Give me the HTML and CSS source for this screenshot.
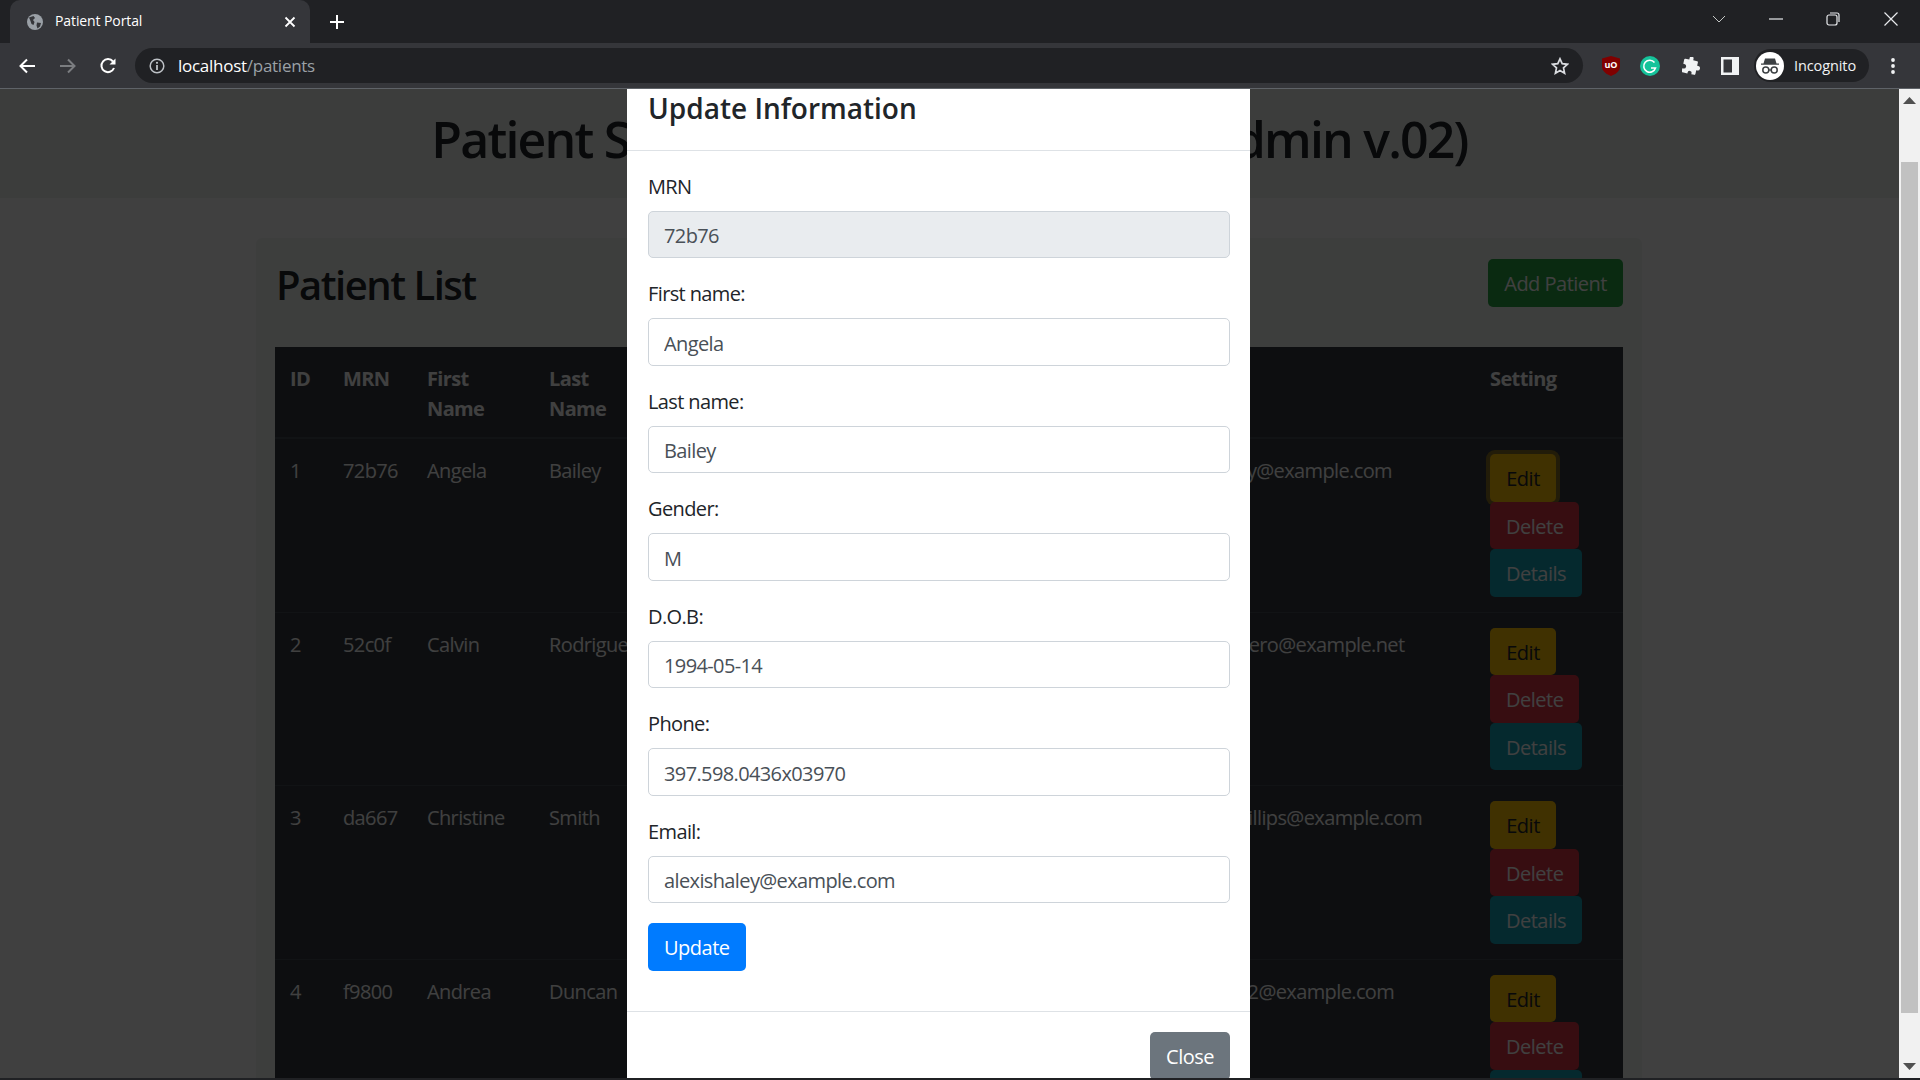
FILE: index.html
```html
<!DOCTYPE html>
<html lang="en">
<head>
<meta charset="UTF-8">
<title>Patient Portal</title>
<link rel="stylesheet" href="styles.css">
</head>
<body>
  <div class="tabstrip">
    <div class="tab">
      <svg class="tab-icon" width="18" height="18" viewBox="0 0 18 18"><circle cx="9" cy="9" r="8" fill="#9aa0a6"/><path d="M3 4.500 7.500 3 9 5 7 7l1.500 2-1 3-2-1-1-3zM11 9.500l4 .5-1 3.500-2.500 2-1-3z" fill="#35363a"/></svg>
      <span class="tab-title">Patient Portal</span>
      <svg class="tab-close" width="12" height="12" viewBox="0 0 12 12"><path d="M1.500 1.500l9 9M10.500 1.500l-9 9" stroke="#fff" stroke-width="1.800"/></svg>
    </div>
    <svg class="new-tab" width="16" height="16" viewBox="0 0 16 16"><path d="M8 1v14M1 8h14" stroke="#fff" stroke-width="2"/></svg>
    <div class="window-btns">
      <svg class="win-chevron" width="14" height="8" viewBox="0 0 14 8"><path d="M1 1l6 6 6-6" fill="none" stroke="#c4c7c5" stroke-width="1"/></svg>
      <svg class="win-min" width="14" height="2" viewBox="0 0 14 2"><path d="M0 1h14" stroke="#e8eaed" stroke-width="1.200"/></svg>
      <svg class="win-max" width="14" height="14" viewBox="0 0 14 14"><rect x="1" y="3" width="10" height="10" rx="2" fill="none" stroke="#e8eaed" stroke-width="1.200"/><path d="M4 1h7a2 2 0 0 1 2 2v7" fill="none" stroke="#e8eaed" stroke-width="1.200"/></svg>
      <svg class="win-close" width="14" height="14" viewBox="0 0 14 14"><path d="M.5.5l13 13M13.500.5l-13 13" stroke="#e8eaed" stroke-width="1.200"/></svg>
    </div>
  </div>

  <div class="toolbar">
    <svg class="nav-back" width="18" height="18" viewBox="0 0 18 18"><path d="M17 9H3M9 2.500 2.500 9 9 15.500" fill="none" stroke="#fff" stroke-width="2"/></svg>
    <svg class="nav-forward" width="18" height="18" viewBox="0 0 18 18"><path d="M1 9h14M9 2.500 15.500 9 9 15.500" fill="none" stroke="#7b7d80" stroke-width="2"/></svg>
    <svg class="nav-reload" width="18" height="18" viewBox="0 0 18 18"><path d="M15 11a6.500 6.500 0 1 1-1-6.500" fill="none" stroke="#fff" stroke-width="2"/><path d="M16.500 1.500v6h-6z" fill="#fff"/></svg>
    <div class="omnibox">
      <svg class="info-icon" width="16" height="16" viewBox="0 0 16 16"><circle cx="8" cy="8" r="6.800" fill="none" stroke="#bdc1c6" stroke-width="1.500"/><path d="M8 7v5" stroke="#bdc1c6" stroke-width="1.800"/><circle cx="8" cy="4.800" r="1.100" fill="#bdc1c6"/></svg>
      <span class="url"><span class="url-host">localhost</span>/patients</span>
      <svg class="star" width="18" height="18" viewBox="0 0 18 18"><path d="M9 1.800l2.200 4.900 5.300.6-4 3.600 1.100 5.300L9 13.500l-4.600 2.700 1.100-5.300-4-3.600 5.300-.6z" fill="none" stroke="#dadce0" stroke-width="1.700"/></svg>
    </div>
    <svg class="ext ext-ublock" width="18" height="20" viewBox="0 0 18 20"><path d="M9 0l9 2.500v8C18 15.500 13 18.500 9 20 5 18.500 0 15.500 0 10.500v-8z" fill="#800000"/><text x="9" y="12" text-anchor="middle" class="ublock-text">uO</text></svg>
    <svg class="ext ext-grammarly" width="20" height="20" viewBox="0 0 20 20"><circle cx="10" cy="10" r="10" fill="#15c39a"/><path d="M14.500 6.500A6 6 0 1 0 15.500 12H11" fill="none" stroke="#fff" stroke-width="1.600"/></svg>
    <svg class="ext ext-puzzle" width="18" height="18" viewBox="0 0 18 18"><path d="M6 1.500a2 2 0 0 1 4 0V3h4a1 1 0 0 1 1 1v3.500h1a2.300 2.300 0 0 1 0 4.600h-1V16a1 1 0 0 1-1 1h-3v-1a2 2 0 0 0-4 0v1H2a1 1 0 0 1-1-1v-3h1a2.300 2.300 0 0 0 0-4.600H1V4a1 1 0 0 1 1-1h4z" fill="#f1f3f4" transform="rotate(12 9 9)"/></svg>
    <svg class="ext ext-panel" width="18" height="18" viewBox="0 0 18 18"><rect x="0" y="0" width="18" height="18" fill="#f1f3f4"/><rect x="2.500" y="2.500" width="8.500" height="13" fill="#35363a"/></svg>
    <div class="profile">
      <svg class="avatar" width="28" height="28" viewBox="0 0 28 28"><circle cx="14" cy="14" r="14" fill="#fff"/><path d="M9 6.500h10l1.500 5h2.500v1.300H5v-1.300h2.500z" fill="#3c4043"/><circle cx="9.800" cy="18" r="3" fill="none" stroke="#3c4043" stroke-width="1.500"/><circle cx="18.200" cy="18" r="3" fill="none" stroke="#3c4043" stroke-width="1.500"/><path d="M12.800 18h2.400" stroke="#3c4043" stroke-width="1.300"/></svg>
      <span class="profile-name">Incognito</span>
    </div>
    <svg class="kebab" width="4" height="16" viewBox="0 0 4 16"><circle cx="2" cy="2" r="1.900" fill="#f1f3f4"/><circle cx="2" cy="8" r="1.900" fill="#f1f3f4"/><circle cx="2" cy="14" r="1.900" fill="#f1f3f4"/></svg>
  </div>

  <div class="viewport">
    <div class="page">
      <div class="jumbotron">
        <h1>Patient Satisfaction Management (Admin v.02)</h1>
      </div>

      <div class="card">
        <div class="card-top">
          <h2>Patient List</h2>
          <button class="btn btn-success">Add Patient</button>
        </div>
        <table class="patients">
          <colgroup>
            <col class="col-id"><col class="col-mrn"><col class="col-first"><col class="col-last"><col class="col-gender"><col class="col-dob"><col class="col-phone"><col class="col-email"><col class="col-setting">
          </colgroup>
          <thead>
            <tr><th>ID</th><th>MRN</th><th>First Name</th><th>Last Name</th><th>Gender</th><th>D.O.B</th><th>Phone</th><th>Email</th><th>Setting</th></tr>
          </thead>
          <tbody>
            <tr>
              <td>1</td><td>72b76</td><td>Angela</td><td>Bailey</td><td>M</td><td>1994-05-14</td><td>397.598.0436x03970</td><td>alexishaley@example.com</td>
              <td class="cell-actions"><div class="actions"><button class="btn btn-warning btn-focus">Edit</button><button class="btn btn-danger">Delete</button><button class="btn btn-info">Details</button></div></td>
            </tr>
            <tr>
              <td>2</td><td>52c0f</td><td>Calvin</td><td>Rodriguez</td><td>M</td><td>1987-02-09</td><td>594.221.0187</td><td>alfredromero@example.net</td>
              <td class="cell-actions"><div class="actions"><button class="btn btn-warning">Edit</button><button class="btn btn-danger">Delete</button><button class="btn btn-info">Details</button></div></td>
            </tr>
            <tr>
              <td>3</td><td>da667</td><td>Christine</td><td>Smith</td><td>F</td><td>1979-11-23</td><td>726.340.9915</td><td>kristinaphillips@example.com</td>
              <td class="cell-actions"><div class="actions"><button class="btn btn-warning">Edit</button><button class="btn btn-danger">Delete</button><button class="btn btn-info">Details</button></div></td>
            </tr>
            <tr>
              <td>4</td><td>f9800</td><td>Andrea</td><td>Duncan</td><td>F</td><td>2001-07-30</td><td>815.662.4408</td><td>armorris32@example.com</td>
              <td class="cell-actions"><div class="actions"><button class="btn btn-warning">Edit</button><button class="btn btn-danger">Delete</button><button class="btn btn-info">Details</button></div></td>
            </tr>
          </tbody>
        </table>
      </div>

      <div class="backdrop"></div>

      <div class="modal">
        <div class="modal-header">
          <h5>Update Information</h5>
        </div>
        <div class="modal-body">
          <form>
            <div class="form-group"><label>MRN</label><input class="form-control" type="text" value="72b76" disabled></div>
            <div class="form-group"><label>First name:</label><input class="form-control" type="text" value="Angela"></div>
            <div class="form-group"><label>Last name:</label><input class="form-control" type="text" value="Bailey"></div>
            <div class="form-group"><label>Gender:</label><input class="form-control" type="text" value="M"></div>
            <div class="form-group"><label>D.O.B:</label><input class="form-control" type="text" value="1994-05-14"></div>
            <div class="form-group"><label>Phone:</label><input class="form-control" type="text" value="397.598.0436x03970"></div>
            <div class="form-group"><label>Email:</label><input class="form-control" type="text" value="alexishaley@example.com"></div>
            <button type="button" class="btn btn-primary">Update</button>
          </form>
        </div>
        <div class="modal-footer">
          <button type="button" class="btn btn-secondary">Close</button>
        </div>
      </div>
    </div>

    <div class="scrollbar">
      <svg class="arrow" width="13" height="7" viewBox="0 0 13 7"><path d="M6.500 0 13 7H0z" fill="#505050"/></svg>
      <div class="track"><div class="thumb"></div></div>
      <svg class="arrow" width="13" height="7" viewBox="0 0 13 7"><path d="M0 0h13L6.500 7z" fill="#505050"/></svg>
    </div>
  </div>
  <div class="bottom-edge"></div>
</body>
</html>
```

FILE: styles.css
```css
* {
  box-sizing: border-box;
}

body {
  font-family: "Open Sans", "Noto Sans", sans-serif;
  font-size: 20px;
  line-height: 30px;
  letter-spacing: -0.62px;
  color: #212529;
  margin: 0;
  height: 1080px;
  overflow: hidden;
  display: flex;
  flex-direction: column;
  background-color: #202124;
}

/* browser chrome */
.tabstrip {
  height: 43px;
  background-color: #202124;
  display: flex;
  align-items: center;
  flex-shrink: 0;
}

.tab {
  width: 300px;
  height: 43px;
  margin-left: 10px;
  padding: 0 14px 0 16px;
  background-color: #35363a;
  border-radius: 10px 10px 0 0;
  display: flex;
  align-items: center;
}

.tab-title {
  flex: 1;
  margin-left: 11px;
  padding-bottom: 2px;
  font-size: 14px;
  letter-spacing: -0.1px;
  color: #fff;
}

.new-tab {
  margin-left: 19px;
}

.window-btns {
  margin-left: auto;
  display: flex;
  align-items: center;
  padding-bottom: 6px;
}

.win-chevron {
  margin-right: 43px;
}

.win-min {
  margin-right: 43px;
}

.win-max {
  margin-right: 44px;
}

.win-close {
  margin-right: 22px;
}

.toolbar {
  height: 46px;
  padding-left: 18px;
  background-color: #35363a;
  border-bottom: 1px solid #5f6368;
  display: flex;
  align-items: center;
  flex-shrink: 0;
}

.nav-forward {
  margin-left: 23px;
}

.nav-reload {
  margin-left: 22px;
}

.omnibox {
  width: 1448px;
  height: 35px;
  margin-left: 18px;
  padding: 0 14px 0 14px;
  background-color: #202124;
  border-radius: 18px;
  display: flex;
  align-items: center;
}

.url {
  flex: 1;
  margin-left: 13px;
  font-size: 17px;
  letter-spacing: -0.27px;
  color: #9aa0a6;
}

.url-host {
  color: #fff;
}

.ext-ublock {
  margin-left: 19px;
}

.ublock-text {
  font-size: 9px;
  font-weight: 700;
  letter-spacing: 0;
  fill: #fff;
}

.ext-grammarly {
  margin-left: 20px;
}

.ext-puzzle {
  margin-left: 22px;
}

.ext-panel {
  margin-left: 21px;
}

.profile {
  width: 115px;
  height: 33px;
  margin-left: 15px;
  padding-left: 2px;
  background-color: #202124;
  border-radius: 17px;
  display: flex;
  align-items: center;
}

.profile-name {
  margin-left: 10px;
  font-size: 14.5px;
  letter-spacing: -0.1px;
  color: #f1f3f4;
}

.kebab {
  margin-left: 22px;
}

.viewport {
  flex: 1;
  min-height: 0;
  display: flex;
}

.bottom-edge {
  height: 2px;
  background-color: #202124;
  flex-shrink: 0;
}

.scrollbar {
  width: 21px;
  background-color: #f1f1f1;
  display: flex;
  flex-direction: column;
  align-items: center;
  padding: 8px 0;
}

.track {
  flex: 1;
  width: 100%;
  padding: 58px 2px 50px 2px;
}

.thumb {
  height: 100%;
  background-color: #c1c1c1;
}

/* page content */
.page {
  flex: 1;
  min-width: 0;
  position: relative;
  overflow: hidden;
  background-color: #fff;
}

.jumbotron {
  height: 109px;
  margin-bottom: 40px;
  background-color: #eef1f0;
  text-align: center;
}

h1 {
  margin: 0;
  padding-top: 20px;
  font-size: 50px;
  line-height: 60px;
  font-weight: 600;
  letter-spacing: -1.8px;
}

.card {
  width: 1386px;
  height: 1200px;
  margin-left: 256px;
  padding: 21px 19px;
  background-color: #f3f6f4;
  border-radius: 6px;
}

.card-top {
  height: 88px;
  display: flex;
  justify-content: space-between;
  align-items: flex-start;
}

h2 {
  margin: 0;
  padding: 2px 0 0 1px;
  font-size: 40px;
  line-height: 48px;
  font-weight: 600;
  letter-spacing: -1.5px;
}

.btn {
  font-family: inherit;
  font-size: 20px;
  line-height: 30px;
  letter-spacing: -0.5px;
  padding: 10px 16px 7px;
  height: 47.5px;
  border: 0;
  border-radius: 5px;
  color: #fff;
}

.btn-success {
  background-color: #28a745;
}

.btn-warning {
  min-width: 66px;
  background-color: #ffc107;
  color: #212529;
}

.btn-danger {
  background-color: #dc3545;
}

.btn-info {
  background-color: #17a2b8;
}

.btn-primary {
  background-color: #007bff;
}

.btn-secondary {
  background-color: #6c757d;
}

.btn-focus {
  box-shadow: 0 0 0 4px rgba(222, 170, 12, 0.5);
}

.patients {
  width: 1348px;
  table-layout: fixed;
  border-collapse: collapse;
  background-color: #343a40;
  color: #fff;
}

.col-id { width: 53px; }
.col-mrn { width: 84px; }
.col-first { width: 122px; }
.col-last { width: 112px; }
.col-gender { width: 100px; }
.col-dob { width: 150px; }
.col-phone { width: 250px; }
.col-email { width: 329px; }
.col-setting { width: 148px; }

.patients th,
.patients td {
  padding: 17px 15px 13px;
  text-align: left;
  vertical-align: top;
}

.patients th {
  font-weight: 700;
  border-bottom: 2px solid #454d55;
}

.patients td {
  border-top: 1px solid #454d55;
}

.patients td.cell-actions {
  padding: 15px;
}

.patients tbody tr:first-child td {
  border-top: 0;
}

.actions {
  display: flex;
  flex-direction: column;
  align-items: flex-start;
}

.backdrop {
  position: absolute;
  top: 0;
  left: 0;
  right: 0;
  bottom: 0;
  background-color: rgba(0, 0, 0, 0.75);
}

/* modal is scrolled a little, so its top is cut off */
.modal {
  position: absolute;
  top: 0;
  left: 627px;
  width: 623px;
  height: 1010px;
  background-color: #fff;
}

.modal-header {
  height: 62px;
  padding-top: 1px;
  border-bottom: 1px solid #dee2e6;
}

h5 {
  margin: 0;
  padding-left: 21px;
  font-size: 28px;
  line-height: 36px;
  font-weight: 600;
  letter-spacing: 0;
}

.modal-body {
  padding: 19.500px 20px 40px 21px;
  height: 861px;
  border-bottom: 1px solid #dee2e6;
}

.form-group {
  margin-bottom: 20px;
}

label {
  display: block;
  padding-top: 1px;
  margin-bottom: 9px;
}

.form-control {
  display: block;
  width: 100%;
  height: 47.5px;
  padding: 10px 15px 7px;
  font-family: inherit;
  font-size: 20px;
  letter-spacing: -0.62px;
  color: #495057;
  background-color: #fff;
  border: 1px solid #ced4da;
  border-radius: 5px;
}

.form-control:disabled {
  background-color: #e9ecef;
  opacity: 1;
}

.modal-footer {
  padding: 20px 20px 20px 21px;
  display: flex;
  justify-content: flex-end;
}
```
